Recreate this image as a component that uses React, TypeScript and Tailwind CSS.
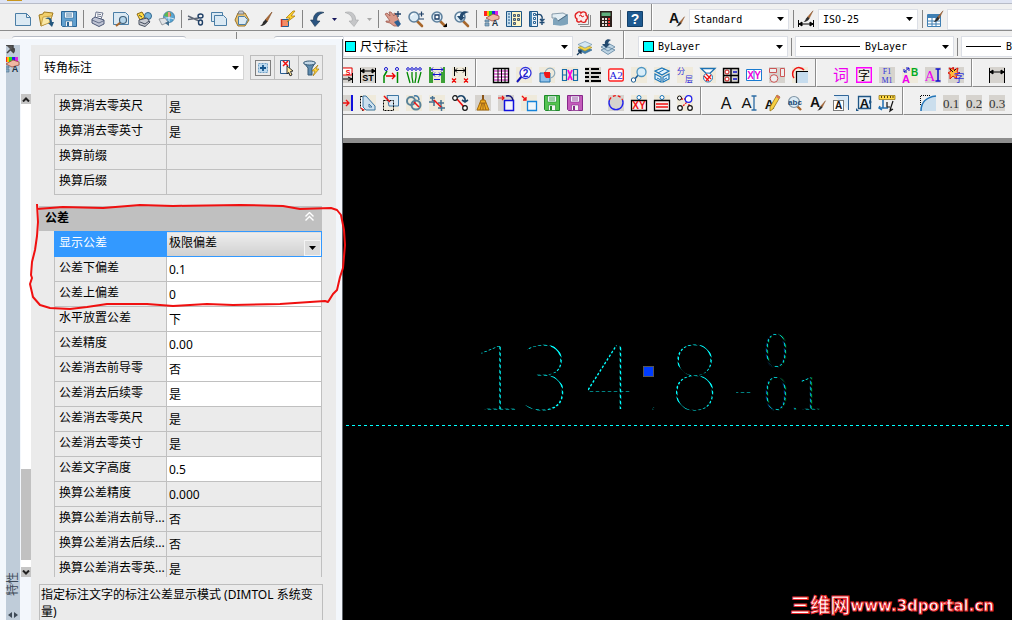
import { useState, type ReactNode } from 'react';
import { clsx } from 'clsx';

const blue = '#1b5c94';
const navy = '#1f3f66';
const serif = '"Liberation Serif", "Noto Sans CJK SC", serif';
const sans = '"Liberation Sans", "Noto Sans CJK SC", sans-serif';

function Glyph({ x, y, size, fill, children, font = sans, weight = 400 }: {
  x: number;
  y: number;
  size: number;
  fill: string;
  children: string;
  font?: string;
  weight?: number;
}) {
  return (
    <text x={x} y={y} fontSize={size} fill={fill} fontFamily={font} fontWeight={weight} textAnchor="middle">
      {children}
    </text>
  );
}

const tile = <path d="M0 0h16v16H0z" fill="#d6d3ce" />;
const cream = <path d="M0 0h16v16H0z" fill="#efeadb" />;
const lens = (
  <>
    <path d="M9 10l5 5" stroke="#a8672c" strokeWidth="2.6" strokeLinecap="round" />
    <circle cx="6" cy="6" r="5" fill="#dcebf5" stroke="#5d7f9c" strokeWidth="1.500" />
    <path d="M3 5a3.500 3.500 0 0 1 3-2" stroke="#fff" strokeWidth="1.200" fill="none" />
  </>
);
const brush = (
  <>
    <path d="M15 1L8 9l2 2z" fill="#b06a34" stroke="#7c4a24" strokeWidth=".6" />
    <path d="M8.500 8.500l2 2C9 13 7 15 3 15c2-1 3-3 3-4z" fill="#2c2c2c" />
  </>
);
const brushSmall = <g transform="translate(5 5) scale(.7)">{brush}</g>;
const floppy = (light: string, dark: string) => (
  <>
    <path d="M.5.5h15v15h-14l-1-1z" fill={light} stroke={dark} />
    <path d="M3.500 1h9v6h-9z" fill="#f4f8fc" stroke={dark} strokeWidth=".6" />
    <path d="M5 3h6M5 5h6" stroke={dark} strokeWidth=".8" />
    <path d="M4.500 10h7v5.500h-7z" fill="#f4f4f4" stroke={dark} strokeWidth=".6" />
    <path d="M6 11h2v4H6z" fill={dark} />
  </>
);
const swatches = (
  <>
    <path d="M1 0h3v5H1z" fill="#f22" />
    <path d="M4 0h2v5H4z" fill="#fb0" />
    <path d="M6 0h3v5H6z" fill="#2d2" />
    <path d="M9 0h3v5H9z" fill="#22e" />
    <path d="M12 0h3v5h-3z" fill="#d2d" />
    <path d="M3 7l7-4 6 2v3L9 10z" fill="#f0b8a2" stroke="#9c4b3b" strokeWidth=".8" />
    <path d="M2 9h4v2H2zM2 12h4v3H2z" fill="#86a9c4" stroke="#4c6e8c" strokeWidth=".6" />
    <Glyph x={12} y={15} size={9} fill="#234" weight={700}>A</Glyph>
  </>
);
const layers = (
  <>
    <path d="M8 8l7 3-7 3.500L1 11z" fill="#3f7fae" stroke="#2c5f88" strokeWidth=".6" />
    <path d="M8 5.500l7 3L8 12 1 8.500z" fill="#f3d447" stroke="#9c8620" strokeWidth=".6" />
    <path d="M8 2.500l7 3L8 9 1 5.500z" fill="#d4e7f3" stroke="#5c86a4" strokeWidth=".6" />
  </>
);
const undo = 'M15 1.500C9-.5 4 3 4.500 9H1.500L6 15.500l5-5.500H8C7 6.500 9.500 3 15 1.500z';

const icons: Record<string, ReactNode> = {
  new: <path d="M.5 2.500h11l4 4v8H.5zM11.500 2.500v4h4" fill="#dbe9f3" stroke="#4b7ea6" />,
  open: (
    <>
      <path d="M1 4l4-1 1-2 9 1-3 9-9 4z" fill="#f2cf6a" stroke="#a07a1f" />
      <path d="M5 6l9-1-3 7-8 3z" fill="#fae8a5" stroke="#b48d32" strokeWidth=".7" />
      <path d="M7 8c4-1 5 1 5 4h-2l4 4 2-5h-2c0-4-3-6-7-3z" fill="#24577f" />
    </>
  ),
  save: floppy('#62a0cf', '#2a6597'),
  print: (
    <>
      <path d="M5 7l1-6 7 1-2 6z" fill="#fff" stroke="#4c5876" strokeWidth=".8" />
      <path d="M2 8l3-2 9 3v4l-5 2.500L2 12z" fill="#bfc4d4" stroke="#4c5876" />
      <path d="M2 9l7 3 5-2.500M7 3l4 .6M7 5l4 .6" stroke="#4c5876" fill="none" strokeWidth=".8" />
    </>
  ),
  preview: (
    <>
      <path d="M.5 1.500h12l3 3v9H.5z" fill="#dbe9f3" stroke="#4b7ea6" />
      <path d="M8 11l-5 4" stroke="#a8672c" strokeWidth="2" />
      <circle cx="10" cy="9" r="3.500" fill="#b5d5ea" stroke="#42627c" strokeWidth="1.200" />
    </>
  ),
  publish: (
    <>
      <path d="M1 3l5-2 3 5-5 3z" fill="#ffdc45" stroke="#8c6813" />
      <circle cx="12" cy="5" r="3.500" fill="#7bb5d9" stroke="#2e668e" />
      <path d="M3 9l8-2 3 4-5 4.500-6-2z" fill="#c9ccd3" stroke="#444d5d" />
      <path d="M4 11l5 2 4-3M3 4l3 2" stroke="#444d5d" fill="none" />
    </>
  ),
  globe: (
    <>
      <circle cx="10" cy="6" r="5.500" fill="#58a6d5" stroke="#3a6f94" strokeWidth=".7" />
      <path d="M10 .5c3 2 3 5 0 5.500l-5-1c1-3 3-4 5-4.500z" fill="#5fb74d" />
      <path d="M9 1l2 0 1 4-3 1z" fill="#e4563a" />
      <path d="M5 8c3-2 7-1 10 0M10 1v10" stroke="#fff" fill="none" strokeWidth=".8" />
      <path d="M0 8l6-1 3 4-6 3z" fill="#e0e3e7" stroke="#84898f" strokeWidth=".8" />
      <path d="M6 12l4-2v5z" fill="#3d6a8b" />
    </>
  ),
  cut: (
    <>
      <path d="M0 5l11 5M0 8.500L11 7" stroke="#5d6776" strokeWidth="1.400" />
      <ellipse cx="12.500" cy="5" rx="2.500" ry="2" fill="none" stroke={navy} strokeWidth="1.400" />
      <ellipse cx="12.500" cy="11.500" rx="2" ry="2.500" fill="none" stroke={navy} strokeWidth="1.400" />
    </>
  ),
  copy: (
    <>
      <path d="M.5 1.500h11v9H.5z" fill="#dbe9f3" stroke="#4b7ea6" />
      <path d="M3.500 4.500h9l3 3v7h-12z" fill="#dbe9f3" stroke="#4b7ea6" />
    </>
  ),
  paste: (
    <>
      <path d="M4 2h7l4 7-4 6H4L1 9z" fill="#e6c172" stroke="#9b7427" />
      <path d="M5 0h4l1 3H4z" fill="#c5c9cf" stroke="#666" strokeWidth=".7" />
      <path d="M4.500 5.500h6l3 3-2 5h-7z" fill="#dbe9f3" stroke="#4b7ea6" />
    </>
  ),
  brush,
  block: (
    <>
      <path d="M1.500 8.500h7v7h-7z" fill="#f28b66" stroke="#1f5e98" />
      <path d="M13 0L6 7h4l-3 4 8-6h-4l4-5z" fill="#ffd22e" stroke="#b0810e" strokeWidth=".8" />
      <path d="M1.500 8v8" stroke="#c32" strokeWidth="1.500" />
    </>
  ),
  undo: <path d={undo} fill="#2b5581" stroke="#17344f" strokeWidth=".6" />,
  redo: <path d={undo} fill="#c5c6c8" stroke="#a4a6a8" strokeWidth=".6" transform="matrix(-1 0 0 1 16 0)" />,
  pan: (
    <>
      <path d="M0 3l2-1 3 3-1-4 2 0 3 4 0-3 2 1 3 7 0 5-5 0-4-3-4-1 0-1 4 0z" fill="#d9998a" stroke="#a05c50" strokeWidth=".8" />
      <path d="M9 11l4-2 3 4-3 3z" fill="#2c5f92" />
      <path d="M10 3h6M13 0v6" stroke={navy} strokeWidth="1.300" />
    </>
  ),
  zoom: (
    <>
      {lens}
      <path d="M11 3h5M13.500.5v5M11 8h5" stroke={navy} strokeWidth="1.200" />
    </>
  ),
  zoomWin: (
    <>
      {lens}
      <path d="M4 4h4v4H4z" fill="#fff" stroke={navy} strokeWidth="1.300" />
      <path d="M16 12v4h-4z" fill="#000" />
    </>
  ),
  zoomPrev: (
    <>
      {lens}
      <path d="M15 1C10-1 6 1 6 5H3l4 5 4-4H9c0-3 3-4 6-5z" fill="#23496e" />
    </>
  ),
  props: swatches,
  design: (
    <>
      <path d="M.5.5h15v15H.5z" fill="#fff7c7" stroke="#1f5685" />
      <path d="M1 1h4v14H1z" fill="#c4ddef" />
      <path d="M5.500 1v14M2 3h2M2 6h2M2 9h2M2 12h2" stroke="#1f5685" />
      <path d="M7.500 3.500h2v2h-2zM11.500 3.500h2v2h-2zM7.500 7.500h2v2h-2zM11.500 7.500h2v2h-2zM7.500 11.500h2v2h-2z" fill="#7fb2d9" stroke="#4d5b66" />
    </>
  ),
  palettes: (
    <>
      <path d="M.5.5h8v15h-8z" fill="#e7eff6" stroke="#1f5685" />
      <path d="M1 1h2v14H1z" fill="#4583b3" />
      <path d="M4.500 2.500h2v2h-2zM4.500 6.500h2v2h-2zM4.500 10.500h2v2h-2z" fill="#fff" stroke="#2a6597" />
      <path d="M7 4c5-2 7 1 6 5M11 8l2 2 2.500-2M10.500 11.500h5M13 9v5" stroke="#1f4a73" strokeWidth="1.400" fill="none" />
    </>
  ),
  sheets: (
    <>
      <path d="M1 9c0-3 7-2 15-6v10C9 16 5 14 1 14z" fill="#7ea3bb" />
      <path d="M0 3l11-1 4 2-9 6-2-3-4 0z" fill="#e3eef4" stroke="#71899b" strokeWidth=".8" />
      <path d="M6 10l9-6" stroke="#4f7089" />
    </>
  ),
  markup: (
    <>
      <path d="M15.500 4v11.500H5M13.500 3v10.500H3" stroke="#8b8b8b" fill="none" />
      <path d="M2 2c1-2 4-1 4 0 2-2 6-1 5 2 2 1 2 4 0 5 0 3-4 3-5 1-2 2-5 1-4-2C-1 6 0 3 2 2z" fill="#fbeaea" stroke="#e11d1d" strokeWidth="1.400" />
      <path d="M4 5l2-1 1 2 2-1" stroke="#e11d1d" fill="none" />
    </>
  ),
  calc: (
    <>
      <path d="M2 0h12v16H2z" fill="#2c201c" />
      <path d="M3.500 1.500h9v3.500h-9z" fill="#5fae7d" />
      <path d="M4 7h2v2H4zM7 7h2v2H7zM4 10h2v2H4zM7 10h2v2H7zM4 13h2v2H4zM7 13h2v2H7z" fill="#e8e0dc" />
      <path d="M10 7h2v2h-2zM10 10h2v2h-2zM10 13h2v2h-2z" fill="#e33" />
    </>
  ),
  help: (
    <>
      <path d="M.5.5h15v15H.5z" fill="#1d5990" stroke="#123f69" />
      <Glyph x={8} y={13} size={14} fill="#fff" weight={700}>?</Glyph>
    </>
  ),
  textStyle: (
    <>
      <Glyph x={5} y={12} size={14} fill="#111" weight={700}>A</Glyph>
      {brushSmall}
    </>
  ),
  dimStyle: (
    <>
      <path d="M.5 9v7M15.500 9v7M1 13h14M4 11l-3 2 3 2zM12 11l3 2-3 2z" stroke="#000" fill="#000" />
      <g transform="translate(3 -1) scale(.8)">{brush}</g>
    </>
  ),
  tableStyle: (
    <>
      <path d="M.5 3.500h13v12H.5z" fill="#fff" stroke="#3f7fb3" />
      <path d="M1 4h12v3H1z" fill="#3f7fb3" />
      <path d="M1 10h12M1 13h12M5 7v8M9 7v8" stroke="#3f7fb3" />
      <g transform="translate(4 -1) scale(.8)">{brush}</g>
    </>
  ),
  layerTo: (
    <>
      {layers}
      <path d="M0 16l4-4M1 12h3v3" stroke="#16395a" fill="none" strokeWidth="1.300" />
    </>
  ),
  layerPrev: (
    <>
      <path d="M8 8l7 3-7 4.500L1 11zM8 4l7 4-7 4-7-4z" fill="#bed4e3" stroke="#5d83a0" strokeWidth=".8" />
      <path d="M11 1C7-1 4 2 5 5H2l4 4 4-4H8c0-2 1-3 3-4z" fill="#23496e" />
    </>
  ),
  dimS: (
    <>
      {tile}
      <path d="M1 1h14v7H1z" fill="#fff" stroke="#e00" />
      <Glyph x={11} y={7.5} size={7} fill="#e00" weight={700}>S</Glyph>
      <path d="M15.500 6v10M2 12h13M11 10l4 2-4 2" stroke="#000" fill="none" />
    </>
  ),
  dimST: (
    <>
      {tile}
      <path d="M.5 1v15M15.500 1v15M1 4h14M4 2L1 4l3 2zM12 2l3 2-3 2z" stroke="#000" fill="#000" />
      <Glyph x={8} y={14} size={9} fill="#000" weight={700}>ST</Glyph>
    </>
  ),
  moveDim: (
    <>
      <path d="M1 16V9l3-5M14.500 5v11" stroke="#080" strokeWidth="1.500" fill="none" />
      <path d="M3 9h9M9 6l3 3-3 3" stroke="#e00" strokeWidth="1.300" fill="none" />
      <circle cx="3" cy="2" r="1.500" fill="#fff" stroke="#11c" />
      <circle cx="14" cy="2" r="1.500" fill="#fff" stroke="#11c" />
    </>
  ),
  fan: (
    <>
      <path d="M1 5l3 11M6 5v5l1 6M10 5v5l-1 6M15 5l-3 11" stroke="#080" strokeWidth="1.300" fill="none" />
      {[2, 6, 10, 14].map(x => <circle key={x} cx={x} cy="2" r="1.300" fill="#fff" stroke="#11c" />)}
    </>
  ),
  spacing: (
    <>
      {cream}
      <path d="M1 0v16M3 5v11M13 5v11M15 0v16" stroke="#080" strokeWidth="1.500" />
      <path d="M2 2.500h12M4 7.500h8M5 12.500h6M4 .5l-2 2 2 2M12 .5l2 2-2 2M6 5.500l-2 2 2 2M10 5.500l2 2-2 2" stroke="#11c" fill="none" />
    </>
  ),
  dimX: (
    <>
      {cream}
      <path d="M2.500 0v9M13.500 0v9M3 3.500h10M5 1.500l-2 2 2 2M11 1.500l2 2-2 2" stroke="#000" fill="none" />
      <path d="M0 11.500l4 4M4 11.500l-4 4M12 11.500l4 4M16 11.500l-4 4" stroke="#e00" strokeWidth="1.200" />
    </>
  ),
  table: (
    <>
      <path d="M.5 1.500h15v14H.5z" fill="#fff" stroke="#000" strokeWidth="1.400" />
      <path d="M1 4h14M1 7h14M1 10h14M1 13h14" stroke="#b0a" />
      <path d="M5 1v15M8.500 1v15M12 1v15" stroke="#000" />
    </>
  ),
  find2: (
    <>
      {cream}
      <path d="M6 9l-5 6" stroke="#11b" strokeWidth="2" />
      <circle cx="9.500" cy="6" r="5.500" fill="#fff" stroke="#33d" strokeWidth="1.300" />
      <Glyph x={9.5} y={9.5} size={10} fill="#22c" weight={700}>2</Glyph>
    </>
  ),
  overlap: (
    <>
      {cream}
      <path d="M1 6h10v9H1z" fill="#8fc1e9" stroke="#1e6dab" />
      <circle cx="11" cy="6" r="4.800" fill="none" stroke="#8ba8b9" strokeWidth="1.200" />
      <path d="M5 5h6v6H7c-2-2-2-4-2-6z" fill="#f01616" />
    </>
  ),
  eightX: (
    <>
      {cream}
      <path d="M.5 2.500h4v11h-4zM.5 8h4M11.500 2.500h4v11h-4zM11.500 8h4" stroke="#176aa8" strokeWidth="1.200" />
      <path d="M6 3l4 10M10 3L6 13" stroke="#f0d" strokeWidth="1.800" />
    </>
  ),
  list: (
    <>
      {tile}
      <path d="M0 2h4M0 6h4M0 10h4M0 14h4M6 2h8M6 6h10M6 10h8M6 14h10" stroke="#000" strokeWidth="2" />
    </>
  ),
  a2: (
    <>
      <rect x=".7" y="2" width="14.600" height="12" rx="1.500" fill="#fff" stroke="#f22" strokeWidth="1.400" />
      <Glyph x={8} y={12} size={11} fill="#22d" font={serif}>A2</Glyph>
    </>
  ),
  link: (
    <>
      {cream}
      <path d="M3 13l5-6" stroke={blue} strokeWidth="1.500" />
      <circle cx="10.500" cy="5" r="4.500" fill="#d8edf9" stroke="#4c94c1" strokeWidth="1.300" />
      <circle cx="2.500" cy="13" r="2.200" fill="#fff" stroke={blue} />
    </>
  ),
  cube: (
    <>
      {cream}
      <path d="M8 1l7 3-7 4-7-4zM1 7l6 3v5l-6-3zM15 7l-6 3v5l6-3z" fill="#e2f2fc" stroke="#1b75b8" strokeWidth="1.200" />
      <path d="M4 6l7-4M3 11l3 1.500M13 11l-3 1.500" stroke="#1b75b8" />
    </>
  ),
  split: (
    <>
      {cream}
      <Glyph x={4} y={7} size={8} fill="#33d">分</Glyph>
      <Glyph x={12} y={15} size={8} fill="#33d">层</Glyph>
    </>
  ),
  funnelRed: (
    <>
      {cream}
      <path d="M1 1.500h14L8 8z" fill="#fff" stroke="#1d72b4" strokeWidth="1.300" />
      <circle cx="8" cy="10.500" r="4.500" fill="#fff" stroke="#1d72b4" />
      <path d="M4 9l5 5M6 7l5 5M11 8l-5 6" stroke="#e11" strokeWidth="1.200" />
    </>
  ),
  params: (
    <>
      <path d="M.5 1.500h15v14H.5zM8 1v15M0 8.500h16" fill="#d6d3ce" stroke="#000" strokeWidth="1.400" />
      <circle cx="4" cy="5" r="2" fill="#fff" stroke="#c11" />
      <circle cx="4" cy="12" r="2" fill="#fff" stroke="#c11" />
      <path d="M10 5h4M10 12h4" stroke="#11c" strokeWidth="1.500" />
    </>
  ),
  xy: (
    <>
      <path d="M.5 2.500h15v11H.5zM8 2v12" fill="#fff" stroke="#1a7bd0" />
      <Glyph x={4.5} y={12} size={10} fill="#e0d" weight={700}>X</Glyph>
      <Glyph x={11.5} y={12} size={10} fill="#e0d" weight={700}>Y</Glyph>
    </>
  ),
  shapes: (
    <>
      {tile}
      <path d="M.5 1.500h7v4h-7zM11.500 1.500h4v8h-4z" fill="#eee" stroke="#c55" />
      <circle cx="5" cy="11.500" r="3.800" fill="#eee" stroke="#c55" />
    </>
  ),
  filletRed: (
    <>
      {cream}
      <path d="M2 11a6 6 0 1 1 10-8" stroke="#e11" strokeWidth="1.500" />
      <path d="M5 5h11v11H5z" fill="#c6dcee" />
      <path d="M16 4.500H4.500V16" stroke="#000" strokeWidth="1.200" />
    </>
  ),
  word: <Glyph x={8} y={14} size={16} fill="#e0e">词</Glyph>,
  char: (
    <>
      <path d="M.7.7h14.600v14.600H.7z" fill="#f1eee8" stroke="#f0f" strokeWidth="1.400" />
      <Glyph x={8} y={12.5} size={12} fill="#000">字</Glyph>
    </>
  ),
  f1m1: (
    <>
      {tile}
      <Glyph x={8} y={7} size={8} fill="#33d" font={serif}>F1</Glyph>
      <Glyph x={8} y={15.5} size={8} fill="#33d" font={serif}>M1</Glyph>
    </>
  ),
  ab: (
    <>
      {cream}
      <Glyph x={4} y={15.5} size={11} fill="#e0e" weight={700}>A</Glyph>
      <Glyph x={12.5} y={8.5} size={10} fill="#0a2" weight={700}>B</Glyph>
      <path d="M2 5l5-4M2 2v3h3M4 1h3v3" stroke="#11c" fill="none" />
    </>
  ),
  aI: (
    <>
      {tile}
      <Glyph x={5} y={14} size={15} fill="#e0e" font={serif}>A</Glyph>
      <path d="M13 2v12M10.500 2h5M10.500 14h5" stroke="#11c" strokeWidth="1.500" />
    </>
  ),
  burst: (
    <>
      {tile}
      <path d="M5 0l1 3 4-2-1 4 3 1-4 2 1 4-4-3-3 3 0-5-2-1 3-2-2-3 4 1z" fill="#ffb93a" stroke="#d11" />
      <path d="M2 2l3 3M8 2L6 4" stroke="#111" />
      <Glyph x={11} y={15} size={11} fill="#33d">字</Glyph>
    </>
  ),
  dimLinear: (
    <>
      {tile}
      <path d="M.5 1v15M15.500 1v15M1 5h14M4 3L1 5l3 2zM12 3l3 2-3 2z" stroke="#000" fill="#000" />
    </>
  ),
  extend: (
    <>
      {tile}
      <path d="M3 8h9M9 5l3 3-3 3" stroke="#e11" strokeWidth="1.300" fill="none" />
      <path d="M15 0v16" stroke="#11d" strokeWidth="2" />
    </>
  ),
  mirror: (
    <>
      {cream}
      <path d="M.5 1.500l2 0 4 5v6l-4 3-2-3z" fill="#fff" stroke="#000" strokeDasharray="2 1" />
      <path d="M3 1h3l9 10v4H6L3 12z" fill="#cce0ee" stroke="#3c76a3" />
      <path d="M9 9l3 3H9z" fill="#efeadb" stroke="#3c76a3" />
      <path d="M1 13l3 2.500" stroke="#e11" strokeWidth="1.200" />
    </>
  ),
  stretch: (
    <>
      {cream}
      <path d="M4 .5h11.500V11H6z" stroke="#3c76a3" fill="#dceaf4" />
      <path d="M.5 5.500h10v10H.5z" fill="none" stroke="#000" strokeDasharray="2 1" />
      <path d="M1 1l6 6" stroke="#e11" strokeWidth="1.500" />
    </>
  ),
  rings: (
    <>
      {cream}
      <circle cx="5" cy="6" r="4" fill="none" stroke="#588299" strokeWidth="2" />
      <circle cx="10" cy="10" r="4.500" fill="none" stroke="#588299" strokeWidth="2" />
      <path d="M8 7l5 5" stroke="#e11" strokeWidth="1.500" />
      <path d="M8 1c3-1 5 1 5 4" fill="none" stroke="#3c76a3" strokeWidth="1.500" />
    </>
  ),
  grips: (
    <>
      {cream}
      <path d="M1 3h5M3.500 1v5M0 7h6M5 5v6M9 8h6M12 5v6M9 13h7M12.500 11v5" stroke="#456f90" strokeWidth="1.500" />
      <path d="M5 5l7 7" stroke="#e11" strokeWidth="1.500" />
    </>
  ),
  rotate: (
    <>
      <path d="M5 4l7 8" stroke="#e11" strokeWidth="1.600" />
      <circle cx="3" cy="3" r="2.300" fill="#fff" stroke="#111" strokeWidth="1.200" />
      <circle cx="13" cy="13" r="2.300" fill="#fff" stroke="#111" strokeWidth="1.200" />
      <path d="M6 2c4-3 8 0 7 5M10 5l3 2 3-2" stroke="#1c4669" strokeWidth="1.600" fill="none" />
    </>
  ),
  broom: (
    <>
      {tile}
      <path d="M8 0v6" stroke="#8a5418" strokeWidth="2" />
      <path d="M6 5h4l4 10H2z" fill="#f0ac20" stroke="#a36a0c" />
      <path d="M7 8l-2 7M8 8v7M9 8l2 7M5 8h6" stroke="#8a5418" strokeWidth=".8" />
    </>
  ),
  pageRot: (
    <>
      {tile}
      <path d="M6.500 5.500h9v10h-9z" fill="#f4f4fb" stroke="#11d" strokeWidth="1.500" />
      <path d="M0 3h6M4 1l2 2-2 2" stroke="#e11" fill="none" strokeWidth="1.200" />
      <path d="M8 1c3-1 6 0 7 4" stroke="#117" fill="none" strokeWidth="1.500" />
    </>
  ),
  scale: (
    <>
      {cream}
      <path d="M6.500 6.500h9v9h-9z" fill="#f1f6fa" stroke="#1583d9" strokeWidth="1.300" />
      <path d="M1 1l4 4M5 2v3H2" stroke="#e11" fill="none" strokeWidth="1.300" />
    </>
  ),
  saveGreen: floppy('#54c350', '#1f8a2b'),
  saveViolet: floppy('#c45bbb', '#87288a'),
  arc: (
    <>
      {tile}
      <path d="M1.500 5a7 7 0 1 0 13 0" stroke="#22e" strokeWidth="1.300" fill="none" />
      <path d="M1.500 5a7 7 0 0 1 13 0" stroke="#e11" strokeWidth="1.300" fill="none" strokeDasharray="3 2" />
    </>
  ),
  circleXY: (
    <>
      {cream}
      <circle cx="8" cy="2.500" r="2" fill="#fff" stroke="#1b75b8" />
      <path d="M.5 5.500h15v10H.5z" fill="#fbeeee" stroke="#000" strokeWidth="1.300" />
      <Glyph x={8} y={14} size={10} fill="#e11" weight={700}>XY</Glyph>
    </>
  ),
  circleRows: (
    <>
      {cream}
      <circle cx="8" cy="2.500" r="2" fill="#fff" stroke="#1b75b8" />
      <path d="M.5 5.500h15v10H.5z" fill="#fbeeee" stroke="#000" strokeWidth="1.300" />
      <path d="M2 9h12M2 12h12" stroke="#e11" strokeWidth="1.300" />
    </>
  ),
  nodes: (
    <>
      {cream}
      <path d="M4 4h7M4 13l7-7M12 6v7" stroke="#e11" strokeDasharray="2 1" strokeWidth="1.300" />
      <circle cx="11.500" cy="4" r="3.300" fill="#fff" stroke="#22e" strokeWidth="1.300" />
      <circle cx="2.500" cy="3" r="2" fill="#fff" stroke="#111" />
      <circle cx="3" cy="13" r="2.300" fill="#fff" stroke="#111" strokeWidth="1.200" />
      <circle cx="13" cy="13" r="2.300" fill="#fff" stroke="#111" strokeWidth="1.200" />
    </>
  ),
  textA: <Glyph x={8} y={14} size={16} fill="#111">A</Glyph>,
  textAI: (
    <>
      <Glyph x={5.5} y={13} size={15} fill="#111">A</Glyph>
      <path d="M13 1v14M10.500 1h5M10.500 15h5" stroke="#2c6ca4" strokeWidth="1.300" />
    </>
  ),
  textEdit: (
    <>
      <Glyph x={5.5} y={14} size={13} fill="#111" weight={700}>A</Glyph>
      <path d="M13 0l3 2-7 12-3 2 0-4z" fill="#f6cf42" stroke="#977318" strokeWidth=".8" />
      <path d="M13 0l3 2-1 2-3-2z" fill="#d9705c" />
    </>
  ),
  textFind: (
    <>
      <path d="M9 10l5 5" stroke="#a8672c" strokeWidth="2.400" />
      <circle cx="7" cy="7" r="5.500" fill="#dcebf5" stroke="#8095a5" strokeWidth="1.200" />
      <Glyph x={8} y={10} size={8} fill="#1c4c77" weight={700}>abc</Glyph>
    </>
  ),
  textFrame: (
    <>
      <path d="M1 .5h14.500V15" stroke="#31679a" fill="#d8e8f5" />
      <path d="M.5 5.500h10v10H.5z" fill="#fff" stroke="#000" strokeDasharray="1 1" />
      <Glyph x={5.5} y={14} size={10} fill="#111" weight={700}>A</Glyph>
    </>
  ),
  textScale: (
    <>
      <path d="M2.500 1.500h12v12h-12z" fill="#e4eef6" stroke="#1f5685" strokeWidth="1.300" />
      <Glyph x={8.5} y={12.5} size={13} fill="#111" weight={700}>A</Glyph>
      <path d="M0 13v3h3zM13 5l3 2-3 2z" fill="#1f5685" />
    </>
  ),
  ruler: (
    <>
      <path d="M0 .5h16v4H0z" fill="#ffda46" stroke="#8d6d0a" strokeWidth=".7" />
      <path d="M2.500 1v2M5.500 1v2M8.500 1v2M11.500 1v2M14 1v2" stroke="#55420a" />
      <path d="M4 5v8M0 13h9M1 11l-1 2 3 2" stroke="#1f6eb0" strokeWidth="1.500" fill="none" />
      <path d="M8 7v5h3M14 6l-3 9M12 13l-1 3 3-2" stroke="#111" strokeWidth="1.200" fill="none" />
    </>
  ),
  fillet: (
    <>
      <path d="M1 16C1 8 6 2 16 1v15z" fill="#cbdeed" />
      <path d="M1 16C1 8 6 2 16 1" stroke="#2375b8" strokeWidth="1.600" fill="none" />
      <path d="M.5 10V.5H10" stroke="#000" strokeDasharray="1 1" fill="none" />
    </>
  ),
  r1: <>{tile}<Glyph x={8} y={13} size={13} fill="#333" font={serif}>0.1</Glyph></>,
  r2: <>{tile}<Glyph x={8} y={13} size={13} fill="#333" font={serif}>0.2</Glyph></>,
  r3: <>{tile}<Glyph x={8} y={13} size={13} fill="#333" font={serif}>0.3</Glyph></>,
  pickAdd: (
    <>
      <path d="M.5.5h15v15H.5z" fill="none" stroke="#111" strokeDasharray="1 1" />
      <path d="M3.500 3.500h9v9h-9z" fill="#bcd9ef" stroke="#6f9fc4" strokeDasharray="2 1" />
      <path d="M8 5v6M5 8h6" stroke="#15558c" strokeWidth="1.800" />
    </>
  ),
  selectObj: (
    <>
      <path d="M1.500.5h9v13h-9z" fill="#eef3f9" stroke="#2a5c8e" />
      <path d="M4 1l5 5M9 1L4 6" stroke="#e11" strokeWidth="1.500" />
      <path d="M8 6l6 5-2.500.5 1.500 3.500-2 .8-1.300-3.500L8 14z" fill="#ffe9a0" stroke="#222" strokeWidth=".9" />
    </>
  ),
  quick: (
    <>
      <path d="M1 3l4 5v7l4 0V8l3-5z" fill="#5f8cb0" stroke="#355975" />
      <ellipse cx="6.500" cy="3" rx="6" ry="2" fill="#c1d6e6" stroke="#355975" />
      <path d="M15 5l-6 6h3l-2 5 6-7h-3z" fill="#ffd43a" stroke="#a87e10" strokeWidth=".7" />
    </>
  ),
};

const titles: Record<string, string> = {
  new: '新建', open: '打开', save: '保存', print: '打印', cut: '剪切', copy: '复制', paste: '粘贴',
  undo: '放弃', redo: '重做', pan: '平移', zoom: '缩放', help: '帮助', props: '特性',
};

function Icon({ name }: { name: string }) {
  return (
    <svg viewBox="0 0 16 16" className="block size-4 overflow-visible" fill="none" aria-hidden="true">
      {icons[name]}
    </svg>
  );
}

function Tools({ names }: { names: string }) {
  return names.split(' ').map((name, i) => {
    if (name === '|') return <span key={i} className="-mx-px h-[18px] w-px shrink-0 bg-[#858585]" />;
    if (name === 'v' || name === 'V') {
      return (
        <button key={i} type="button" aria-label="历史记录" className="w-[5px] shrink-0">
          <svg viewBox="0 0 5 3" className="block h-[3px] w-[5px]">
            <path d="M0 0h5L2.500 3z" fill={name === 'v' ? '#16165c' : '#a9a9a9'} />
          </svg>
        </button>
      );
    }
    return (
      <button key={i} type="button" aria-label={titles[name] ?? name} className="size-4 shrink-0">
        <Icon name={name} />
      </button>
    );
  });
}

function Group({ children, first, last, className }: {
  children: ReactNode;
  first?: boolean;
  last?: boolean;
  className?: string;
}) {
  return (
    <div
      className={clsx(
        'flex items-center border-b border-[#8c8c8c] pt-1',
        !first && 'border-l border-l-white',
        last ? 'min-w-0 flex-1' : 'shrink-0 border-r border-r-[#8c8c8c]',
        className
      )}
    >
      {children}
    </div>
  );
}

function Combo({ label, value, options = [], lead, className, font }: {
  label: string;
  value: string;
  options?: string[];
  lead?: ReactNode;
  className?: string;
  font?: string;
}) {
  return (
    <div className={clsx('flex h-[21px] shrink-0 items-center border border-[#dcdfe6] bg-white', className)}>
      {lead}
      <select
        aria-label={label}
        defaultValue={value}
        className={clsx(
          'h-full min-w-0 flex-1 appearance-none bg-transparent pl-1 text-black outline-none',
          font ?? 'font-["DejaVu_Sans_Mono",monospace] text-[10px]'
        )}
      >
        {[value, ...options].map(o => <option key={o}>{o}</option>)}
      </select>
      <Caret />
    </div>
  );
}

function Caret() {
  return (
    <svg viewBox="0 0 7 4" className="mr-1 h-1 w-[7px] shrink-0" aria-hidden="true">
      <path d="M0 0h7L3.500 4z" fill="#000" />
    </svg>
  );
}

const swatch = <span className="ml-1 size-[11px] shrink-0 border border-black bg-[#00ffff]" />;

interface Prop {
  name: string;
  value: string;
  editable?: boolean;
}

const altRows: Prop[] = [
  { name: '换算消去零英尺', value: '是' },
  { name: '换算消去零英寸', value: '是' },
  { name: '换算前缀', value: '' },
  { name: '换算后缀', value: '' },
];

const toleranceRows: Prop[] = [
  { name: '公差下偏差', value: '0.1', editable: true },
  { name: '公差上偏差', value: '0', editable: true },
  { name: '水平放置公差', value: '下', editable: true },
  { name: '公差精度', value: '0.00', editable: true },
  { name: '公差消去前导零', value: '否', editable: true },
  { name: '公差消去后续零', value: '是', editable: true },
  { name: '公差消去零英尺', value: '是' },
  { name: '公差消去零英寸', value: '是' },
  { name: '公差文字高度', value: '0.5', editable: true },
  { name: '换算公差精度', value: '0.000' },
  { name: '换算公差消去前导...', value: '否' },
  { name: '换算公差消去后续...', value: '否' },
  { name: '换算公差消去零英...', value: '是' },
];

function PropRow({ name, value, editable }: Prop) {
  return (
    <tr className="h-[25px]">
      <th scope="row" className="w-[112px] overflow-hidden border border-[#c0c0c0] p-0 pl-1 text-left align-top font-normal whitespace-nowrap">
        <span className="block leading-[21px]">{name}</span>
      </th>
      <td className={clsx('border border-[#c0c0c0] p-0', editable && 'bg-white')}>
        <input
          aria-label={name}
          defaultValue={value}
          readOnly={!editable}
          className="block h-6 w-full bg-transparent pl-0.5 leading-5 outline-none"
        />
      </td>
    </tr>
  );
}

function PropertiesPalette() {
  const [open, setOpen] = useState(true);

  return (
    <aside className="flex min-h-0 flex-1 border-r border-[#60656b] bg-[#f3f7fc] pt-1.5 pr-1.5 pl-1.5">
      {/* Title strip */}
      <div className="flex w-[14px] shrink-0 flex-col items-center bg-[#bfccd9] text-[#3e4a57]">
        <svg viewBox="0 0 14 30" className="h-[30px] w-[14px]" aria-hidden="true">
          <path d="M0 0h7v5H5l3 3M1 8l3-3M6 5h3M8 7v-4" stroke="#444" fill="#555" strokeWidth="1.500" />
          <g transform="translate(-3 12)">{swatches}</g>
        </svg>
        <span className="mt-auto mb-4 rotate-180 text-xs leading-[14px] [text-orientation:sideways] [writing-mode:vertical-rl]">特性</span>
        <svg viewBox="0 0 10 6" className="mb-0.5 h-1.5 w-2.5" aria-hidden="true">
          <path d="M4 0v6L0 3zM6 0v6l4-3z" fill="#3e4a57" />
        </svg>
      </div>

      {/* Scrollbar */}
      <div className="mt-[49px] mb-[43px] ml-px flex w-[10px] shrink-0 flex-col bg-white">
        <button type="button" aria-label="向上滚动" className="flex h-[10px] items-center justify-center bg-[#c5c5c5]">
          <svg viewBox="0 0 8 5" className="h-[5px] w-2"><path d="M1 4.500l3-3 3 3" stroke="#222" strokeWidth="2" fill="none" /></svg>
        </button>
        <span className="flex-[365]" />
        <span className="flex-[91] bg-[#c1c1c1]" />
        <span className="flex-[7]" />
        <button type="button" aria-label="向下滚动" className="flex h-[10px] items-center justify-center bg-[#c5c5c5]">
          <svg viewBox="0 0 8 5" className="h-[5px] w-2"><path d="M1 .5l3 3 3-3" stroke="#222" strokeWidth="2" fill="none" /></svg>
        </button>
      </div>

      <div className="flex min-h-0 min-w-0 flex-1 flex-col bg-[#ebebeb] pl-2 text-xs text-black">
        <div className="mt-2.5 flex h-[25px] shrink-0 pr-[13px]">
          <Combo
            label="对象类型"
            value="转角标注"
            options={['全部']}
            className="mr-[7px] h-[25px]! flex-1 border-[#d4d4d4]!"
            font="font-['Noto_Sans','Noto_Sans_CJK_SC',sans-serif] text-xs"
          />
          {['pickAdd', 'selectObj', 'quick'].map(name => (
            <button key={name} type="button" aria-label={name} className="-ml-px flex w-[25px] items-center justify-center border border-[#bdbdbd]">
              <Icon name={name} />
            </button>
          ))}
        </div>

        <div className="mt-[14px] min-h-0 flex-1 overflow-hidden pr-[14px]">
          <div className="pl-[15px]">
            <table className="w-full table-fixed border-collapse">
              <tbody>
                {altRows.map(row => <PropRow key={row.name} {...row} />)}
              </tbody>
            </table>
          </div>

          <button
            type="button"
            onClick={() => setOpen(!open)}
            className="mt-[11px] flex h-[25px] w-full items-center justify-between bg-[#c0c0c0] pr-2 pl-1.5 font-bold"
          >
            <span className="pb-0.5">公差</span>
            <svg viewBox="0 0 9 9" className="mb-1 h-[9px] w-[9px]" aria-hidden="true">
              <path d="M.5 4.500l4-4 4 4M.5 8.500l4-4 4 4" stroke="#fff" strokeWidth="1.400" fill="none" />
            </svg>
          </button>
          {open && (
            <div className="pl-[15px]">
              <table className="w-full table-fixed border-collapse">
                <tbody>
                  <tr className="h-[25px] bg-[#3399ff]">
                    <th scope="row" className="w-[112px] border border-[#3399ff] p-0 pl-1 text-left align-top font-normal text-white">
                      <label htmlFor="tol-mode" className="block leading-[21px]">显示公差</label>
                    </th>
                    <td className="border border-[#3399ff] bg-linear-to-b from-[#eeeeee] to-[#d0d0d0] p-0">
                      <div className="flex h-6 items-center">
                        <select id="tol-mode" defaultValue="极限偏差" className="h-6 min-w-0 flex-1 appearance-none bg-transparent pb-0.5 pl-0.5 outline-none">
                          <option>无</option>
                          <option>对称</option>
                          <option>极限偏差</option>
                          <option>极限尺寸</option>
                          <option>基本尺寸</option>
                        </select>
                        <span className="flex h-4 w-[17px] items-center justify-end self-end border border-[#f4f4f4] bg-[#dcdcdc]">
                          <Caret />
                        </span>
                      </div>
                    </td>
                  </tr>
                  {toleranceRows.map(row => <PropRow key={row.name} {...row} />)}
                </tbody>
              </table>
            </div>
          )}
        </div>

        <p className="mt-[7px] mr-[13px] h-9 shrink-0 border border-b-0 border-[#bdbdbd] pt-px pl-px leading-[17px]">
          指定标注文字的标注公差显示模式 (DIMTOL 系统变量)
        </p>
      </div>
    </aside>
  );
}

function DrawingCanvas() {
  return (
    <main className="relative min-h-0 flex-1 overflow-hidden bg-black">
      <svg className="block h-full w-full" role="img" aria-label="尺寸标注">
        <defs>
          <pattern id="dash" width="6" height="6" patternUnits="userSpaceOnUse">
            <path d="M-3 -3L9 9M-3 3L3 9M3 -3L9 3" stroke="#0ff" strokeWidth="2.500" />
          </pattern>
        </defs>
        {/* the black stroke thins the numerals down to a hairline */}
        <g fill="url(#dash)" stroke="#000" fontFamily="'DejaVu Sans Light', 'DejaVu Sans', sans-serif" fontWeight="200">
          <text x="127 174 239 296 323" y="268" fontSize="90" strokeWidth="3">134.8</text>
          <text x="389" y="267" fontSize="64" strokeWidth="2">-</text>
          <text x="419" y="224" fontSize="45" strokeWidth="1">0</text>
          <text x="419 445 453" y="267" fontSize="45" strokeWidth="1">0.1</text>
        </g>
        <rect x="300.500" y="223.500" width="10" height="10" fill="#003cff" stroke="#555" />
        <path d="M3 282.500h2000" stroke="#0ff" strokeDasharray="3 3" />
      </svg>
      <a
        href="#"
        className="absolute right-[18px] bottom-0 flex items-center font-['DejaVu_Sans','Noto_Sans_CJK_SC',sans-serif] text-[15px] leading-7 font-bold text-white [-webkit-text-stroke:1px_#e8262b]"
      >
        <span className="text-xl leading-7">三维网</span>www.3dportal.cn
      </a>
    </main>
  );
}

export default function App() {
  return (
    <div className="relative flex h-screen flex-col overflow-hidden bg-[#f0f0f0] font-['Noto_Sans','Noto_Sans_CJK_SC',sans-serif]">
      <div className="h-1 shrink-0 border-b border-[#b8bcc8] bg-[#dfe4f3]">
        <span className="ml-[7px] block h-px w-[15px] bg-[#c8961e]" />
      </div>

      {/* Standard and styles toolbars */}
      <header className="flex h-[27px] shrink-0">
        <Group first className="gap-[7px] pr-2 pl-[15px]">
          <Tools names="new open save | print preview publish globe | cut copy paste brush block | undo v redo V | pan zoom zoomWin zoomPrev | props design palettes sheets markup calc | help" />
        </Group>
        <Group last className="gap-1 pl-4">
          <Tools names="textStyle" />
          <Combo label="文字样式" value="Standard" className="w-[100px]" />
          <span className="h-[18px] w-px shrink-0 bg-[#858585]" />
          <Tools names="dimStyle" />
          <Combo label="标注样式" value="ISO-25" options={['Standard']} className="w-[100px]" />
          <span className="h-[18px] w-px shrink-0 bg-[#858585]" />
          <Tools names="tableStyle" />
          <Combo label="表格样式" value="" className="w-[100px]" />
        </Group>
      </header>

      <div className="flex min-h-0 flex-1">
        <div className="flex w-[343px] shrink-0 flex-col">
          <div className="flex h-2 shrink-0 items-end pl-3">
            <span className="h-[3px] w-[174px] rounded-t border-t border-[#b5bac4] bg-white" />
            <span className="ml-[50px] h-[7px] w-px bg-[#858585]" />
            <span className="ml-[37px] h-[3px] flex-1 rounded-tl border-t border-[#b5bac4] bg-white" />
          </div>
          <PropertiesPalette />
        </div>

        <div className="flex min-w-0 flex-1 flex-col">
          {/* Layers and object properties */}
          <div className="flex h-7 shrink-0">
            <Group first className="pr-[7px]">
              <Combo
                label="图层"
                value="尺寸标注"
                lead={<span className="ml-px size-[11px] shrink-0 border border-black bg-[#00ffff]" />}
                className="mr-1 w-[230px]"
                font="font-['Liberation_Sans','Noto_Sans_CJK_SC',sans-serif] text-xs"
              />
              <div className="flex gap-[7px]"><Tools names="layerTo layerPrev" /></div>
            </Group>
            <Group last className="gap-[3px] pl-[13px]">
              <Combo label="颜色" value="ByLayer" lead={swatch} className="w-[150px]" />
              <span className="h-[18px] w-px shrink-0 bg-[#858585]" />
              <Combo
                label="线型"
                value="ByLayer"
                lead={<span className="mr-px ml-1 h-px w-[60px] shrink-0 bg-black" />}
                className="w-[159px]"
              />
              <span className="h-[18px] w-px shrink-0 bg-[#858585]" />
              <Combo
                label="线宽"
                value="ByLayer"
                lead={<span className="mr-px ml-1 h-px w-[35px] shrink-0 bg-black" />}
                className="w-[159px]"
              />
            </Group>
          </div>

          <div className="flex h-7 shrink-0 overflow-hidden">
            <Group first className="-ml-1.5 gap-[7px] pr-[7px]">
              <Tools names="dimS dimST moveDim fan spacing dimX" />
            </Group>
            <Group className="gap-[7px] pr-[7px] pl-4">
              <Tools names="table find2 overlap eightX list a2 link cube split funnelRed params xy shapes filletRed" />
            </Group>
            <Group className="gap-[7px] pr-[7px] pl-4">
              <Tools names="word char f1m1 ab aI burst" />
            </Group>
            <Group last className="pl-4">
              <Tools names="dimLinear" />
            </Group>
          </div>

          <div className="flex h-7 shrink-0 overflow-hidden">
            <Group first className="-ml-1.5 gap-[7px] pr-[7px]">
              <Tools names="extend mirror stretch rings grips rotate broom pageRot scale saveGreen saveViolet" />
            </Group>
            <Group className="gap-[7px] pr-[7px] pl-4">
              <Tools names="arc circleXY circleRows nodes" />
            </Group>
            <Group className="gap-[7px] pr-[7px] pl-4">
              <Tools names="textA textAI textEdit textFind textStyle textFrame textScale ruler" />
            </Group>
            <Group last className="gap-[7px] pl-4">
              <Tools names="fillet r1 r2 r3" />
            </Group>
          </div>

          <div className="h-7 shrink-0 border-b-[5px] border-[#8e8e8e]" />
          <DrawingCanvas />
        </div>
      </div>

      {/* Hand-drawn highlight around the tolerance group */}
      <svg className="pointer-events-none absolute top-0 left-0 h-80 w-[350px]" fill="none" aria-hidden="true">
        <path
          d="M37 204L38 222L37 236L35 250L32 262L31 275L32 278L30 284L33 297L40 305L50 308L70 309L87 307L107 304L147 304L173 306L207 304L233 305L280 304L325 301L328 302L333 294L337 290L340 277L343 268L345 245L344 230L341 215L337 210L331 208L300 209L283 206L240 205L173 206L140 205L103 208L63 207L37 209"
          stroke="#f01010"
          strokeWidth="2"
          strokeLinejoin="round"
        />
      </svg>
    </div>
  );
}
